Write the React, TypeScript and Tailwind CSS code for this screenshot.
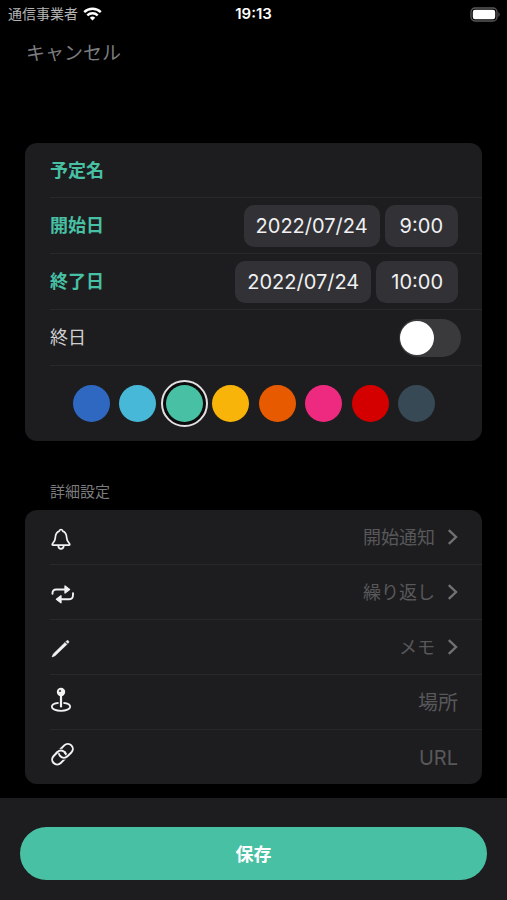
import { useState } from 'react';
import type { ReactNode } from 'react';

const COLORS = [
  { name: '青', className: 'bg-[#2f68c1]' },
  { name: '水色', className: 'bg-[#48b8d8]' },
  { name: '緑', className: 'bg-[#48c0a4]' },
  { name: '黄', className: 'bg-[#f8b408]' },
  { name: 'オレンジ', className: 'bg-[#e85a00]' },
  { name: 'ピンク', className: 'bg-[#ee2a80]' },
  { name: '赤', className: 'bg-[#d40000]' },
  { name: 'グレー', className: 'bg-[#364955]' },
];

function WifiIcon() {
  return (
    <svg width="19" height="14" viewBox="0 0 19 14" fill="none" stroke="#fff" strokeWidth="2.4">
      <path d="M1.2 5.1a11.8 11.8 0 0 1 16.6 0" />
      <path d="M4.3 8.4a7.4 7.4 0 0 1 10.4 0" />
      <path d="M9.5 13.6 6.8 10.8a3.9 3.9 0 0 1 5.4 0z" fill="#fff" stroke="none" />
    </svg>
  );
}

function BatteryIcon() {
  return (
    <svg width="31" height="15" viewBox="0 0 31 15" fill="none">
      <rect x="1" y="1" width="26" height="13" rx="4" stroke="#58585a" strokeWidth="1.3" />
      <rect x="2.8" y="2.8" width="22.4" height="9.4" rx="2.2" fill="#fff" />
      <path d="M28.4 5.2c1.6.5 1.6 4.1 0 4.6z" fill="#58585a" />
    </svg>
  );
}

function BellIcon() {
  return (
    <svg width="24" height="24" viewBox="0 0 24 24" fill="none" stroke="#f2f2f2" strokeWidth="1.7" strokeLinejoin="round">
      <path d="M2.2 17.6c0-1.5 2.8-2.6 3-6.2.2-4 1.3-6.5 4.1-7.3.3-1 .8-1.6 1.7-1.6s1.4.6 1.7 1.6c2.8.8 3.9 3.3 4.1 7.3.2 3.6 3 4.7 3 6.2 0 .4-.3.6-.7.6H2.9c-.4 0-.7-.2-.7-.6z" />
      <path d="M8.2 18.6c.2 2.1 1.3 3.2 2.8 3.2s2.600-1.100 2.800-3.200" />
    </svg>
  );
}

function RepeatIcon() {
  return (
    <svg width="24" height="24" viewBox="0 0 24 24" fill="none" stroke="#f2f2f2" strokeWidth="1.9" strokeLinecap="round">
      <path d="M2.5 11.8V11c0-2.300 1.300-3.500 3.600-3.500H15" />
      <path d="M23 11.100v2c0 2.600-1.300 4.200-3.600 4.200H10.500" />
      <path d="M15 4v7l4.600-3.500zM11 13.800v7l-4.600-3.500z" fill="#f2f2f2" strokeWidth="1.3" strokeLinejoin="round" />
    </svg>
  );
}

function PencilIcon() {
  return (
    <svg width="24" height="24" viewBox="0 0 24 24" fill="#f2f2f2" stroke="#f2f2f2" strokeWidth=".6" strokeLinejoin="round">
      <path d="M2 20 3.300 17 15 5.500l1.900 1.900L5 18.800z" />
      <path d="M16 4.500l.6-.6c1.300-1.100 3 .5 1.900 1.800l-.7.7z" />
    </svg>
  );
}

function PlaceIcon() {
  return (
    <svg width="24" height="28" viewBox="0 0 24 28" fill="none" stroke="#f2f2f2">
      <path d="M8.600 17.900c-4 .4-6.800 1.900-6.800 3.900 0 2.300 4.100 4 9.200 4s9.200-1.700 9.200-4c0-2-2.800-3.500-6.800-3.900" strokeWidth="1.800" />
      <path d="M11 11v10.500" strokeWidth="2.200" strokeLinecap="round" />
      <circle cx="11" cy="7" r="4.200" fill="#f2f2f2" stroke="none" />
      <circle cx="10" cy="5.900" r="1.200" fill="#555558" stroke="none" />
    </svg>
  );
}

function LinkIcon() {
  return (
    <svg width="25" height="24" viewBox="0 0 25 24" fill="none" stroke="#f2f2f2" strokeWidth="2">
      <g transform="translate(12.5 12.2) rotate(-45)">
        <rect x="-12.5" y="-5" width="15.5" height="10" rx="5" />
        <rect x="-3" y="-5" width="15.500" height="10" rx="5" stroke="#1d1d1f" strokeWidth="3.800" />
        <rect x="-3" y="-5" width="15.500" height="10" rx="5" />
        {/* one side of the lower ring passes back over the upper one */}
        <path d="M-2 -5a5 5 0 0 1 5 5" stroke="#1d1d1f" strokeWidth="3.800" />
        <path d="M-4 -5h2a5 5 0 0 1 4.300 7.500" />
      </g>
    </svg>
  );
}

function Chevron() {
  return (
    <svg width="11" height="18" viewBox="0 0 11 18" fill="none" stroke="#717174" strokeWidth="2.4">
      <path d="M1.800 2.200 9 9l-7.200 6.800" />
    </svg>
  );
}

function PickerButton({ label, className, children }: { label: string; className: string; children: ReactNode }) {
  return (
    <button
      type="button"
      aria-label={label}
      className={`h-[42px] rounded-[10px] bg-[#323236] font-['Inter',sans-serif] text-xl text-[#f0f0f2] ${className}`}
    >
      {children}
    </button>
  );
}

function DateRow({ label, date, time }: { label: string; date: string; time: string }) {
  return (
    <div className="ml-[25px] flex h-14 items-center justify-between border-b border-[#28282b] pr-6">
      <span className="pt-px text-lg font-bold text-[#48c0a4]">{label}</span>
      <div className="flex gap-[5px]">
        <PickerButton label={`${label} ${date}`} className="px-3">{date}</PickerButton>
        <PickerButton label={`${label} ${time}`} className="px-[15px]">{time}</PickerButton>
      </div>
    </div>
  );
}

function LinkRow({ icon, label }: { icon: ReactNode; label: string }) {
  return (
    <button type="button" className="flex h-[55px] items-center border-b border-[#28282b] pr-6 text-left">
      <span className="pt-1">{icon}</span>
      <span className="ml-auto pt-0.5 text-lg text-[#58585b]">{label}</span>
      <span className="ml-3">
        <Chevron />
      </span>
    </button>
  );
}

function InputRow({ icon, label, last = false }: { icon: ReactNode; label: string; last?: boolean }) {
  return (
    <label className={`flex items-center pr-6 ${last ? 'h-[54px]' : 'h-[55px] border-b border-[#28282b]'}`}>
      <span className="pb-1.5">{icon}</span>
      <input
        type="text"
        aria-label={label}
        placeholder={label}
        className="min-w-0 flex-1 bg-transparent pt-0.5 text-right text-xl text-white outline-none placeholder:text-[#58585b]"
      />
    </label>
  );
}

export default function App() {
  const [title, setTitle] = useState('');
  const [allDay, setAllDay] = useState(false);
  const [color, setColor] = useState('緑');

  return (
    <div className="flex min-h-screen flex-col bg-black font-['Inter','Noto_Sans_CJK_JP',sans-serif] text-white">
      {/* Status bar */}
      <div className="grid h-7 grid-cols-3 items-center px-2">
        <div className="flex items-center gap-[5px] text-sm text-[#b4b4b4]">
          通信事業者
          <WifiIcon />
        </div>
        <span className="text-center text-[15px] font-semibold">19:13</span>
        <span className="-mr-0.5 flex justify-end">
          <BatteryIcon />
        </span>
      </div>

      <header className="flex h-[115px] items-start px-[26px] pt-3">
        <button type="button" className="text-[19px] text-[#7c7c7e]">
          キャンセル
        </button>
      </header>

      <main className="flex flex-col px-[25px]">
        <section className="rounded-xl bg-[#1d1d1f]">
          <div className="ml-[25px] flex h-[55px] items-center gap-4 border-b border-[#28282b] pr-6">
            <label htmlFor="title" className="pt-0.5 text-lg font-bold text-[#48c0a4]">
              予定名
            </label>
            <input
              id="title"
              type="text"
              value={title}
              onChange={(e) => setTitle(e.target.value)}
              className="min-w-0 flex-1 bg-transparent text-lg text-white outline-none"
            />
          </div>
          <DateRow label="開始日" date="2022/07/24" time="9:00" />
          <DateRow label="終了日" date="2022/07/24" time="10:00" />
          <div className="ml-[25px] flex h-14 items-center justify-between border-b border-[#28282b] pr-[21px]">
            <label htmlFor="all-day" className="pt-px text-lg text-[#d0d0d2]">
              終日
            </label>
            <input
              id="all-day"
              type="checkbox"
              role="switch"
              checked={allDay}
              onChange={(e) => setAllDay(e.target.checked)}
              className="flex h-[38px] w-[62px] appearance-none items-center rounded-full bg-[#3a3a3d] px-px before:size-[34px] before:rounded-full before:bg-white checked:justify-end checked:bg-[#48c0a4]"
            />
          </div>
          <div role="radiogroup" aria-label="色" className="flex h-[75px] items-center justify-between pr-[47px] pl-12">
            {COLORS.map((c) => (
              <input
                key={c.name}
                type="radio"
                name="color"
                aria-label={c.name}
                checked={color === c.name}
                onChange={() => setColor(c.name)}
                className={`size-[37px] appearance-none rounded-full outline-offset-[3px] outline-[#e4dfe2] checked:shadow-[0_0_0_3px_#0c0c0d] checked:outline-2 ${c.className}`}
              />
            ))}
          </div>
        </section>

        <h2 className="mt-10 mb-[7px] pl-[25px] text-[15px] leading-[22px] text-[#7c7c7e]">詳細設定</h2>

        <section className="flex flex-col rounded-xl bg-[#1d1d1f] pl-[25px]">
          <LinkRow icon={<BellIcon />} label="開始通知" />
          <LinkRow icon={<RepeatIcon />} label="繰り返し" />
          <LinkRow icon={<PencilIcon />} label="メモ" />
          <InputRow icon={<PlaceIcon />} label="場所" />
          <InputRow icon={<LinkIcon />} label="URL" last />
        </section>
      </main>

      <footer className="mt-auto bg-[#1d1d1f] px-5 pt-[29px] pb-5">
        <button type="button" className="h-[53px] w-full rounded-full bg-[#48c0a4] pt-0.5 text-lg font-bold text-white">
          保存
        </button>
      </footer>
    </div>
  );
}
